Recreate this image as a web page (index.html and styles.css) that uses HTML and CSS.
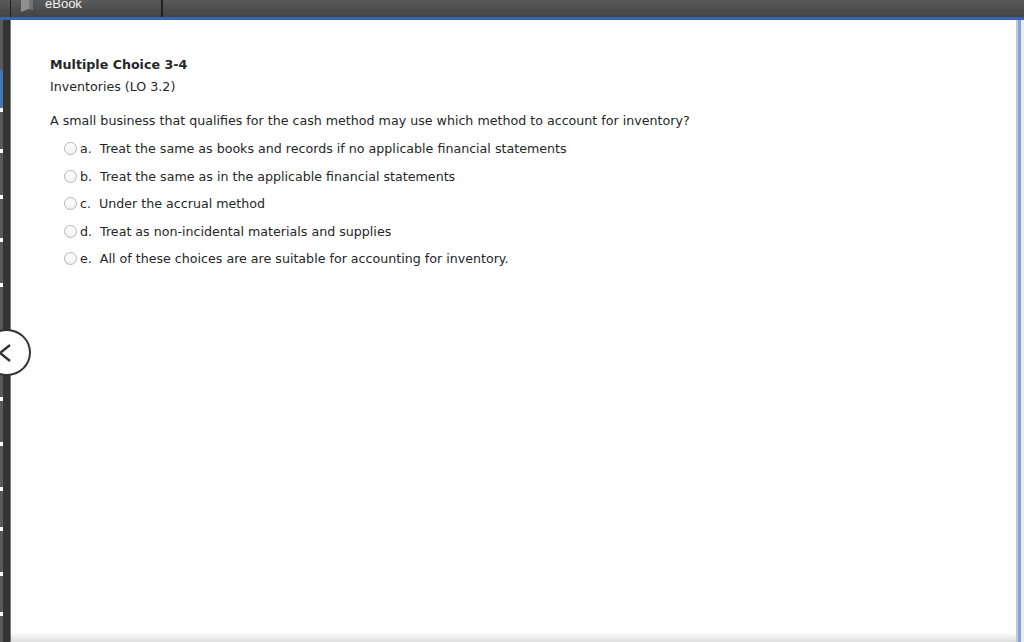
FILE: index.html
```html
<!DOCTYPE html>
<html>
<head>
<meta charset="utf-8">
<link rel="stylesheet" href="styles.css">
</head>
<body>
<div class="app">
  <div class="topbar">
    <div class="tb-left"></div>
    <div class="tab">
      <svg class="book" width="14" height="16" viewBox="0 0 14 16"><path d="M1 2 L9 0 L9 13 L1 16 Z" fill="#8f8f8f"/><path d="M9 0 L13 1 L13 14 L9 13 Z" fill="#727272"/></svg>
      <span class="tab-label">eBook</span>
    </div>
    <div class="tb-rest"></div>
  </div>
  <div class="main">
    <div class="rail">
      <div class="rail-ticks">
        <i class="t g" style="height:50px"></i>
        <i class="t b" style="height:38px"></i>
        <i class="t w"></i>
        <i class="t g" style="height:37px"></i>
        <i class="t w"></i>
        <i class="t g" style="height:42px"></i>
        <i class="t w"></i>
        <i class="t g" style="height:39px"></i>
        <i class="t w"></i>
        <i class="t g" style="height:41px"></i>
        <i class="t w"></i>
        <i class="t g" style="height:110px"></i>
        <i class="t w"></i>
        <i class="t g" style="height:41px"></i>
        <i class="t w"></i>
        <i class="t g" style="height:41px"></i>
        <i class="t w"></i>
        <i class="t g" style="height:36px"></i>
        <i class="t w"></i>
        <i class="t g" style="height:41px"></i>
        <i class="t w"></i>
        <i class="t g" style="height:36px"></i>
        <i class="t w"></i>
        <i class="t g" style="height:30px"></i>
      </div>
      <div class="rail-dark"></div>
      <div class="rail-edge"></div>
    </div>
    <div class="content">
      <h1 class="title">Multiple Choice 3-4</h1>
      <div class="subtitle">Inventories (LO 3.2)</div>
      <p class="question">A small business that qualifies for the cash method may use which method to account for inventory?</p>
      <ul class="choices">
        <li><span class="radio"></span>a.&nbsp; Treat the same as books and records if no applicable financial statements</li>
        <li><span class="radio"></span>b.&nbsp; Treat the same as in the applicable financial statements</li>
        <li><span class="radio"></span>c.&nbsp; Under the accrual method</li>
        <li><span class="radio"></span>d.&nbsp; Treat as non-incidental materials and supplies</li>
        <li><span class="radio"></span>e.&nbsp; All of these choices are are suitable for accounting for inventory.</li>
      </ul>
    </div>
    <div class="right-edge"></div>
  </div>
  <div class="back-btn">
    <svg width="14" height="20" viewBox="0 0 14 20"><path d="M12 2 L2 10 L12 18" fill="none" stroke="#333" stroke-width="2.4"/></svg>
  </div>
</div>
</body>
</html>
```
FILE: styles.css
```css
* { box-sizing: border-box; }
html, body { margin: 0; padding: 0; }
body { width: 1024px; height: 642px; overflow: hidden; background: #ececec; font-family: "DejaVu Sans", Verdana, sans-serif; }
.app { position: relative; width: 1024px; height: 642px; display: flex; flex-direction: column; }
.topbar { height: 20px; display: flex; background: linear-gradient(#5a5a5a, #434343); border-bottom: 3px solid #3b62ac; flex: none; }
.tb-left { width: 11px; border-right: 1px solid #222; }
.tab { width: 152px; border-right: 2px solid #222; display: flex; align-items: flex-start; padding-left: 9px; overflow: hidden; }
.book { margin-top: -4px; }
.tab-label { font-family: "Liberation Sans", Arial, sans-serif; font-size: 13px; color: #f2f2f2; margin-left: 11px; line-height: 13px; margin-top: -3px; }
.tb-rest { flex: 1; }
.main { flex: 1; display: flex; min-height: 0; }
.rail { width: 11px; display: flex; flex: none; }
.rail-ticks { width: 3px; display: flex; flex-direction: column; background: #555; }
.t { display: block; flex: none; }
.t.g { background: #5a5a5a; }
.t.b { background: #3d7bbd; }
.t.w { height: 4px; background: #fff; }
.rail-dark { width: 7px; background: #343434; }
.rail-edge { width: 1px; background: #7a7a7a; }
.content { flex: 1; background: #fff; padding: 37px 0 0 39px; color: #262626; font-size: 12.65px; box-shadow: inset 0 -10px 8px -6px #d8d8d8; }
.title { font-size: 12.65px; font-weight: bold; margin: 0; line-height: 16px; }
.subtitle { margin-top: 6px; line-height: 16px; }
.question { margin: 18px 0 0; line-height: 16px; }
.choices { list-style: none; margin: 6px 0 0; padding: 0 0 0 14px; }
.choices li { display: flex; align-items: center; height: 27.5px; }
.radio { width: 13px; height: 13px; border-radius: 50%; border: 1px solid #b5b5b5; background: linear-gradient(#fff, #f2f2f2); margin-right: 3px; flex: none; }
.right-edge { width: 8px; flex: none; display: flex; background: linear-gradient(to right, #c8c8c8 0, #c8c8c8 2px, #7ea2e2 2px, #7ea2e2 5px, #ececec 5px); }
.back-btn { position: absolute; left: -17px; top: 329px; width: 48px; height: 47px; border-radius: 50%; border: 2px solid #333; background: #fff; display: flex; align-items: center; justify-content: flex-end; padding-right: 17px; }
```
